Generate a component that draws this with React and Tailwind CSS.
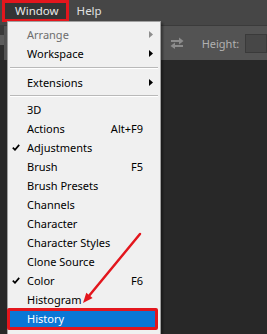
const items = [
  { label: 'Arrange', disabled: true, sub: true },
  { label: 'Workspace', sub: true },
  { sep: true, cls: 'h-[10px]' },
  { label: 'Extensions', sub: true },
  { sep: true, cls: 'h-[8px]' },
  { label: '3D' },
  { label: 'Actions', key: 'Alt+F9' },
  { label: 'Adjustments', checked: true },
  { label: 'Brush', key: 'F5' },
  { label: 'Brush Presets' },
  { label: 'Channels' },
  { label: 'Character' },
  { label: 'Character Styles' },
  { label: 'Clone Source' },
  { label: 'Color', key: 'F6', checked: true },
  { label: 'Histogram' },
  { label: 'History', active: true },
  { label: 'Info', key: 'F8' },
]

function Check() {
  return (
    <svg width="8" height="7" viewBox="0 0 8 7">
      <path d="M0.8 3.6 L3 5.8 L7.2 0.9" fill="none" stroke="#000" strokeWidth="1.7" />
    </svg>
  )
}

function MenuRow({ item }) {
  if (item.sep) {
    return (
      <div className={`${item.cls} flex flex-col justify-center px-[2px]`}>
        <div className="h-px bg-[#b9b9b9]" />
        <div className="h-px bg-white" />
      </div>
    )
  }

  const row = (
    <div className={`flex items-center h-[19px] ${item.active ? 'text-white' : item.disabled ? 'text-[#6d6d6d]' : 'text-black'}`}>
      <span className="w-[19px] pl-[4px] flex items-center">{item.checked && <Check />}</span>
      <span className="flex-1">{item.label}</span>
      {item.key && <span>{item.key}</span>}
      <span className="w-[17px] pl-[6px] flex items-center">
        {item.sub && (
          <svg width="4" height="7" viewBox="0 0 4 7">
            <polygon points="0,0 4,3.5 0,7" fill={item.disabled ? '#8d8d8d' : '#000'} />
          </svg>
        )}
      </span>
    </div>
  )

  if (!item.active) return row

  // highlighted row with the red annotation box
  return (
    <div className="relative">
      <div className="absolute top-[2px] bottom-[1px] left-0 right-[4px] bg-[#0b77d5]" />
      <div className="relative">{row}</div>
      <div className="absolute -top-[1px] -bottom-[2px] -left-[1px] right-[2px] border-[3px] border-[#e3161d] rounded-[2px]" />
    </div>
  )
}

export default function App() {
  return (
    <div className="relative w-[267px] h-[334px] overflow-hidden bg-[#282828] font-['Noto_Sans',Arial,sans-serif] text-[11px] leading-none">
      {/* Menu bar */}
      <div className="h-[25px] bg-[#464646] flex items-start text-[11.5px]">
        <div className="ml-[2px] h-[22px] pl-[10px] pr-[7px] flex items-center bg-[#343434] text-[#e8e8e8] border-[3px] border-[#e3161d]">
          Window
        </div>
        <div className="ml-[8px] h-[22px] flex items-center text-[#e0e0e0]">Help</div>
      </div>

      {/* Options bar */}
      <div className="h-[35px] bg-[#535353] border-t border-[#3b3b3b] flex items-center">
        <div className="w-[7px] self-stretch flex flex-col">
          <div className="h-[9px] bg-[#3a3a3a]" />
          <div className="h-[10px] bg-[#5c5c5c]" />
          <div className="flex-1 bg-[#2e2e2e]" />
        </div>
        <div className="ml-[166px] flex items-center">
          <svg width="14" height="12" viewBox="0 0 14 12">
            <path d="M1 4 H11" stroke="#8c8c8c" strokeWidth="2" />
            <polygon points="9,0.5 13.5,4 9,7.5" fill="#8c8c8c" />
            <path d="M3 9 H13" stroke="#8c8c8c" strokeWidth="2" />
            <polygon points="5,5.5 0.5,9 5,12" fill="#8c8c8c" />
          </svg>
        </div>
        <span className="ml-[18px] text-[#b1b1b1]">Height:</span>
        <div className="ml-[6px] w-[40px] h-[19px] bg-[#474747] border border-[#3a3a3a]" />
      </div>

      {/* Window menu dropdown */}
      <div className="absolute left-[7px] top-[21px] w-[154px] h-[330px] bg-[#f0f0f0] border border-[#a0a0a0] pt-[3px] shadow-[2px_2px_2px_rgba(0,0,0,0.35)]">
        {items.map((item, i) => (
          <MenuRow key={i} item={item} />
        ))}
      </div>

      {/* red pointer arrow */}
      <svg className="absolute inset-0 pointer-events-none" width="267" height="334" viewBox="0 0 267 334">
        <line x1="140" y1="234" x2="89.5" y2="295.3" stroke="#e3161d" strokeWidth="2.5" strokeLinecap="round" />
        <polygon points="83,303 92.6,297.9 86.3,292.7" fill="#e3161d" />
      </svg>
    </div>
  )
}
